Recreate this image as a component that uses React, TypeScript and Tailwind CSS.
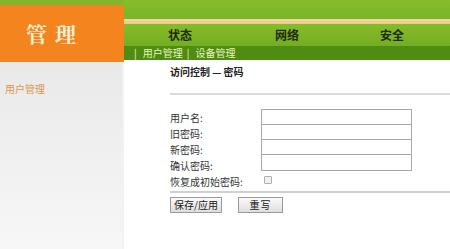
import React from "react";

const cjk = { fontFamily: '"Noto Sans CJK SC", "Noto Sans", sans-serif' };
const serif = { fontFamily: '"Noto Serif CJK SC", "Noto Sans CJK SC", serif' };

export default function App() {
  const labels = ["用户名:", "旧密码:", "新密码:", "确认密码:"];
  return (
    <div className="w-[450px] h-[249px] flex overflow-hidden bg-white" style={cjk}>
      {/* Sidebar */}
      <div className="w-[124px] flex flex-col">
        <div className="h-[5px] bg-[#7fb62a]" />
        <div className="h-[57px] bg-[#f4841d] flex items-center pl-[26px]">
          <span className="text-[21px] font-bold text-[#fdf0d8] tracking-[8px]" style={serif}>管理</span>
        </div>
        <div className="flex-1 bg-gradient-to-b from-[#e9e9e9] to-[#f7f7f7] border-r-2 border-[#f2f2f2] pt-[12px] pl-[5px]">
          <span className="text-[10px] text-[#e0944a]">用户管理</span>
        </div>
      </div>
      {/* Main */}
      <div className="flex-1 flex flex-col">
        <div className="h-[19px] bg-gradient-to-b from-[#86bd2c] to-[#7ab428]" />
        <div className="h-[5px] bg-gradient-to-b from-[#f3d9a0] to-[#e9c88a]" />
        <div className="h-[22px] bg-gradient-to-b from-[#86bc2a] to-[#74ad22] flex items-center text-[12px] font-bold text-[#1e2a0c]">
          <span className="ml-[44px]">状态</span>
          <span className="ml-[83px]">网络</span>
          <span className="ml-[81px]">安全</span>
        </div>
        <div className="h-[14px] bg-[#4f8c14] flex items-center text-[10px] text-[#e6f6b8] leading-none">
          <span className="ml-[10px]">|</span>
          <span className="ml-[6px]">用户管理</span>
          <span className="ml-[4px]">|</span>
          <span className="ml-[6px]">设备管理</span>
        </div>
        <div className="flex flex-col pl-[46px]">
          <div className="mt-[6px] text-[10px] font-bold text-[#222] leading-[12px]">访问控制 — 密码</div>
          <div className="mt-[15px] h-[2px] bg-[#d9d9d9] mr-0" />
          <div className="mt-[14px] flex">
            <div className="w-[91px] flex flex-col text-[10px] text-[#333]">
              {labels.map((l) => (
                <div key={l} className="h-[16px] flex items-center">{l}</div>
              ))}
              <div className="h-[17px] flex items-center">恢复成初始密码:</div>
            </div>
            <div className="flex flex-col">
              <div className="w-[151px] border border-[#a8a8a8] flex flex-col">
                <div className="h-[15px] border-b border-[#a8a8a8]" />
                <div className="h-[15px] border-b border-[#a8a8a8]" />
                <div className="h-[15px] border-b border-[#a8a8a8]" />
                <div className="h-[15px]" />
              </div>
              <div className="h-[17px] flex items-center pl-[3px]">
                <div className="w-[8px] h-[8px] border border-[#b0b0b0] bg-[#f0f0f0] rounded-[1px]" />
              </div>
            </div>
          </div>
          <div className="mt-[1px] h-[2px] bg-[#d0d0d0]" />
          <div className="mt-[4px] flex gap-[16px]">
            <button className="w-[52px] h-[16px] border border-[#9a9a9a] bg-gradient-to-b from-[#fafafa] to-[#dedede] text-[10px] text-[#222] leading-none flex items-center justify-center">保存/应用</button>
            <button className="w-[45px] h-[16px] border border-[#9a9a9a] bg-gradient-to-b from-[#fafafa] to-[#dedede] text-[10px] text-[#222] leading-none flex items-center justify-center tracking-[1px]">重写</button>
          </div>
        </div>
      </div>
    </div>
  );
}
